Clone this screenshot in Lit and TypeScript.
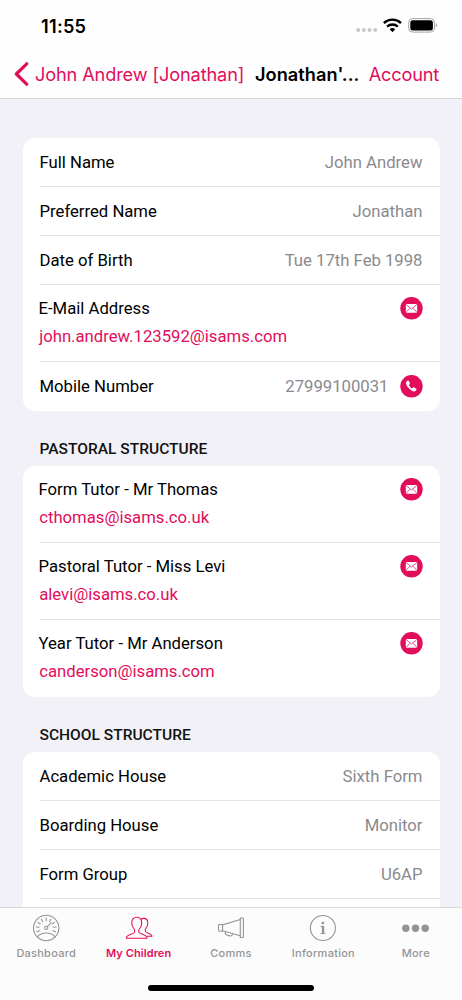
import { LitElement, html, css, svg, nothing } from "lit";
import { customElement, property } from "lit/decorators.js";

type Contact = "mail" | "phone";

interface Row {
  label: string;
  value?: string;
  link?: string;
  contact?: Contact;
}

interface Section {
  title?: string;
  rows: Row[];
}

const sections: Section[] = [
  {
    rows: [
      { label: "Full Name", value: "John Andrew" },
      { label: "Preferred Name", value: "Jonathan" },
      { label: "Date of Birth", value: "Tue 17th Feb 1998" },
      { label: "E-Mail Address", link: "john.andrew.123592@isams.com", contact: "mail" },
      { label: "Mobile Number", value: "27999100031", contact: "phone" },
    ],
  },
  {
    title: "PASTORAL STRUCTURE",
    rows: [
      { label: "Form Tutor - Mr Thomas", link: "cthomas@isams.co.uk", contact: "mail" },
      { label: "Pastoral Tutor - Miss Levi", link: "alevi@isams.co.uk", contact: "mail" },
      { label: "Year Tutor - Mr Anderson", link: "canderson@isams.com", contact: "mail" },
    ],
  },
  {
    title: "SCHOOL STRUCTURE",
    rows: [
      { label: "Academic House", value: "Sixth Form" },
      { label: "Boarding House", value: "Monitor" },
      { label: "Form Group", value: "U6AP" },
      { label: "", value: "" },
    ],
  },
];

const ticks = [-112, -84, -56, -28, 0, 28, 56, 84, 112];

const gauge = svg`
  <circle cx="14.200" cy="14" r="12.700"/>
  <path d="M5.200 22.800c2.300-2.600 5.300-3.800 9-3.800s6.700 1.200 9 3.800"/>
  <path d="M15.300 12.700l3.800-3.900"/>
  <circle cx="14.200" cy="13.900" r="1.600"/>
  ${ticks.map((a) => svg`<path d="M14.200 4v2.800" transform="rotate(${a} 14.200 14)"/>`)}`;

const people = svg`
  <g transform="translate(.9 .3) scale(.96 .95)">
    <path d="M11.500 3.200c-3.500 0-5.400 2.300-5.400 5.600 0 2.900.9 4.900 2.300 6.400 1 1.100 1.300 3.500-.3 4.600-2.200 1.400-6.400 1.700-7.300 4-.2.500-.2.900-.2 1.400h21.300c0-.5 0-.9-.2-1.400-.9-2.300-5-2.600-7.200-4-1.600-1.100-1.300-3.500-.3-4.600 1.400-1.500 2.300-3.500 2.300-6.400 0-3.300-1.800-5.600-5-5.600z"/>
    <path d="M15.900 4.900c.7-.4 1.500-.6 2.500-.6 2.800 0 4.400 1.900 4.400 4.800 0 2.600-.8 4.400-2 5.800-.9 1-1 3 .3 3.900 1.800 1.200 5 1.500 5.800 3.400.1.300.1.600.1.900h-5"/>
  </g>`;

const megaphone = svg`
  <path d="M23.300 4h2.300a.8.800 0 0 1 .8.800v17.900a.8.800 0 0 1-.8.800h-2.300z"/>
  <path d="M23.300 5.500L5.500 11v5.700l17.800 5.100"/>
  <path d="M5.500 10.500H2.400a.9.900 0 0 0-.9.900v4.900c0 .5.400.9.900.9h3.100z"/>
  <path d="M8.500 17.800c-.5 1.600.1 2.800 1.500 3.300l2.600.8c1.300.4 2.600-.3 3-1.700"/>`;

const info = svg`
  <circle cx="13.900" cy="14" r="12.500"/>
  <path class="solid" d="M13.800 7.700a1.400 1.400 0 1 1 0 2.800 1.400 1.400 0 0 1 0-2.800zM11.700 12.100h3.500v6.800l1.200.3v.9h-4.900v-.9l1.400-.3v-5.600l-1.200-.3z"/>`;

const more = svg`
  <circle class="solid" cx="3.800" cy="14.300" r="3.700"/>
  <circle class="solid" cx="13.500" cy="14.300" r="3.700"/>
  <circle class="solid" cx="23.200" cy="14.300" r="3.700"/>`;

const tabs = [
  { label: "Dashboard", icon: gauge },
  { label: "My Children", icon: people, active: true },
  { label: "Comms", icon: megaphone },
  { label: "Information", icon: info },
  { label: "More", icon: more },
];

@customElement("contact-button")
class ContactButton extends LitElement {
  @property() kind: Contact = "mail";

  static styles = css`
    :host { display: block; width: 23px; height: 23px; }
    svg { display: block; width: 23px; height: 23px; }
  `;

  render() {
    return html`<svg viewBox="0 0 23 23">
      <circle cx="11.500" cy="11.300" r="11.200" fill="#e20d5b"/>
      ${this.kind === "mail"
        ? svg`<rect x="5.800" y="6.900" width="11.400" height="8.900" rx="1.200" fill="#fff"/>
            <path d="M6.200 7.600l5.300 4.400 5.300-4.400M6.200 15.200l3.700-3.900M16.800 15.200l-3.700-3.900" fill="none" stroke="#e20d5b" stroke-width=".75"/>`
        : svg`<path transform="translate(4.800 4.700) scale(.54)" fill="#fff" d="M5.100 1.900L3 3.600C1.700 5.100 2 8.600 5.200 13.100c3.400 4.800 8.500 8.600 11.700 8.600 1.700 0 3.300-1.200 4.500-2.800.5-.7.300-1.500-.3-2l-3.600-2.500c-.7-.4-1.500-.3-2 .2l-1.400 1.400c-.5.400-1.100.3-1.600-.1-1.700-1.300-3.300-3-4.600-5-.3-.5-.3-1 .1-1.400l1.200-1.300c.5-.5.600-1.200.2-1.900L7.200 2.300c-.5-.8-1.400-.9-2.100-.4z"/>`}
    </svg>`;
  }
}

@customElement("detail-row")
class DetailRow extends LitElement {
  @property({ attribute: false }) row!: Row;

  static styles = css`
    :host { display: block; padding-left: 17px; }
    .row {
      display: flex;
      align-items: center;
      height: 49px;
      box-sizing: border-box;
      padding-right: 17px;
      border-bottom: 1px solid #e4e4e6;
    }
    :host(:last-of-type) .row { border-bottom-color: transparent; }
    .tall { height: 77px; align-items: flex-start; padding-top: 12px; }
    .label { color: #000; line-height: 24px; padding-top: 3px; }
    .value { margin-left: auto; color: #8a8a8e; line-height: 24px; padding-top: 3px; }
    .stack { display: flex; flex-direction: column; gap: 4px; flex: 1; padding-top: 0.400px; }
    .stack .label { margin-left: -1px; padding-top: 0; }
    .link { color: #e20d5b; line-height: 24px; margin-left: -0.300px; }
    .button { margin-left: 11px; }
    .row:not(.tall) .button { margin-top: 1px; }
  `;

  render() {
    const { label, value, link, contact } = this.row;
    const button = contact
      ? html`<contact-button class="button" .kind=${contact}></contact-button>`
      : nothing;
    return link
      ? html`<div class="row tall">
          <div class="stack"><span class="label">${label}</span><span class="link">${link}</span></div>
          ${button}
        </div>`
      : html`<div class="row"><span class="label">${label}</span><span class="value">${value}</span>${button}</div>`;
  }
}

@customElement("app-root")
class AppRoot extends LitElement {
  static styles = css`
    :host {
      display: flex;
      flex-direction: column;
      height: 1000px;
      overflow: hidden;
      background: #f2f1f7;
      font-family: Roboto, "Liberation Sans", sans-serif;
      font-size: 16.700px;
    }
    .top {
      flex: none;
      height: 99px;
      box-sizing: border-box;
      background: #fefefe;
      border-bottom: 1px solid #d3d3d6;
      font-family: Inter, "Liberation Sans", sans-serif;
    }
    .status {
      display: flex;
      align-items: center;
      height: 50px;
      padding: 0 24px 0 41px;
    }
    .time { flex: 1; font-size: 18.200px; font-weight: 600; letter-spacing: 0.250px; padding-top: 1px; }
    .signals { width: 84px; height: 20px; flex: none; }
    .nav {
      display: flex;
      align-items: center;
      height: 47px;
      padding: 0 23px 0 14px;
      font-size: 18.200px;
      white-space: nowrap;
    }
    .back { display: flex; align-items: center; gap: 6px; color: #e20d5b; width: 241px; letter-spacing: -0.140px; }
    .chevron { width: 15px; height: 24px; flex: none; }
    .title { font-weight: 600; width: 105px; letter-spacing: 0.040px; }
    .account { margin-left: auto; color: #e20d5b; letter-spacing: -0.200px; }
    .content { flex: 1; min-height: 0; overflow: hidden; padding: 38.500px 22.500px 0; }
    .card { background: #fff; border-radius: 12px; overflow: hidden; }
    .heading {
      margin: 0;
      padding: 27px 0 6px 17px;
      font-size: 15.550px;
      font-weight: 500;
      line-height: 22px;
      color: #111;
    }
    .tabs {
      flex: none;
      height: 93px;
      box-sizing: border-box;
      display: flex;
      flex-direction: column;
      align-items: center;
      border-top: 1px solid #d9d9dc;
      background: #fcfcfc;
      font-family: Inter, "Liberation Sans", sans-serif;
    }
    .items { display: grid; grid-template-columns: repeat(5, 1fr); width: 100%; height: 77px; }
    .tab {
      display: flex;
      flex-direction: column;
      align-items: center;
      color: #949496;
      font-size: 11px;
      font-weight: 500;
      letter-spacing: 0.250px;
      padding-top: 6px;
      gap: 4px;
    }
    .tab span { line-height: 14px; }
    .active { color: #e20d5b; font-weight: 600; letter-spacing: 0.100px; }
    .icon { width: 28px; height: 28px; fill: none; stroke: currentColor; stroke-width: 1.100; stroke-linecap: round; }
    .icon .solid { fill: currentColor; stroke: none; }
    .home { width: 166px; height: 6px; border-radius: 3px; background: #000; }
  `;

  render() {
    return html`
      <header class="top">
        <div class="status">
          <span class="time">11:55</span>
          <svg class="signals" viewBox="0 0 84 20">
            <g fill="#c9c9cb">
              <circle cx="4.200" cy="15" r="2"/><circle cx="9.900" cy="15" r="2"/>
              <circle cx="15.500" cy="15" r="2"/><circle cx="21.200" cy="15" r="2"/>
            </g>
            <g transform="translate(-4.900 -.9) scale(1.1)">
              <g fill="none" stroke="#000" stroke-width="2.200">
                <path d="M31.600 8.100a11.400 11.400 0 0 1 15.600 0"/>
                <path d="M34.500 11.400a7.200 7.200 0 0 1 9.800 0"/>
              </g>
              <path d="M36.900 13.700a4 4 0 0 1 5 0l-2.500 2.700z"/>
            </g>
            <rect x="54.700" y="3.600" width="25.800" height="13.500" rx="4" fill="none" stroke="#a5a5a7" stroke-width="1"/>
            <rect x="56.300" y="5.200" width="22.600" height="10.300" rx="2.500"/>
            <path d="M81.800 8.300c1.700.7 1.700 3.400 0 4.100z" fill="#a5a5a7"/>
          </svg>
        </div>
        <nav class="nav">
          <span class="back">
            <svg class="chevron" viewBox="0 0 15 24"><path d="M12.700 1.800L2.300 12l10.400 10.200" fill="none" stroke="#e20d5b" stroke-width="3.200" stroke-linecap="round" stroke-linejoin="round"/></svg>
            <span>John Andrew [Jonathan]</span>
          </span>
          <span class="title">Jonathan'...</span>
          <span class="account">Account</span>
        </nav>
      </header>
      <main class="content">
        ${sections.map(
          (s) => html`
            ${s.title ? html`<h2 class="heading">${s.title}</h2>` : nothing}
            <section class="card">${s.rows.map((r) => html`<detail-row .row=${r}></detail-row>`)}</section>
          `,
        )}
      </main>
      <footer class="tabs">
        <div class="items">
          ${tabs.map(
            (t) => html`<div class="tab ${t.active ? "active" : ""}">
              <svg class="icon" viewBox="0 0 28 28">${t.icon}</svg>
              <span>${t.label}</span>
            </div>`,
          )}
        </div>
        <div class="home"></div>
      </footer>
    `;
  }
}
